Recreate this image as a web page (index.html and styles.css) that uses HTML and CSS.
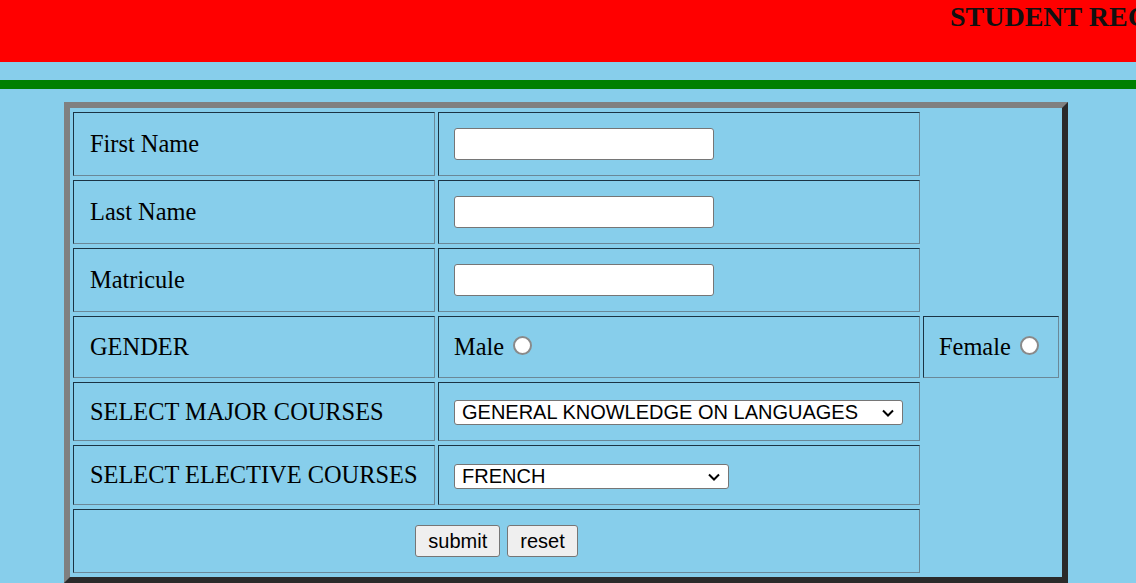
FILE: index.html
```html
<!DOCTYPE html>
<html lang="en">
<head>
<meta charset="utf-8">
<title>Student Registration Form</title>
<link rel="stylesheet" href="styles.css">
</head>
<body>
<header class="banner">
  <h3 class="banner-title">STUDENT REGISTRATION FORM</h3>
</header>
<div class="rule"></div>
<main class="page">
  <form class="reg-form">
    <table class="reg-table">
      <colgroup>
        <col class="col-label">
        <col class="col-field">
        <col class="col-extra">
      </colgroup>
      <tr class="row-field">
        <td class="cell cell-label">First Name</td>
        <td class="cell"><input type="text" class="text-input" name="first"></td>
      </tr>
      <tr class="row-field">
        <td class="cell cell-label">Last Name</td>
        <td class="cell"><input type="text" class="text-input" name="last"></td>
      </tr>
      <tr class="row-field">
        <td class="cell cell-label">Matricule</td>
        <td class="cell"><input type="text" class="text-input" name="matricule"></td>
      </tr>
      <tr class="row-gender">
        <td class="cell cell-label">GENDER</td>
        <td class="cell">Male <input type="radio" class="radio" name="gender" value="male"></td>
        <td class="cell">Female <input type="radio" class="radio" name="gender" value="female"></td>
      </tr>
      <tr class="row-major">
        <td class="cell cell-label">SELECT MAJOR COURSES</td>
        <td class="cell cell-select cell-select-major">
          <span class="select-wrap select-major">
            <select class="select" name="major">
              <option>GENERAL KNOWLEDGE ON LANGUAGES</option>
            </select>
            <svg class="chevron" width="12" height="8" viewBox="0 0 12 8" aria-hidden="true"><polyline points="1,1.5 6,6.5 11,1.5" fill="none" stroke="#000" stroke-width="2"/></svg>
          </span>
        </td>
      </tr>
      <tr class="row-elective">
        <td class="cell cell-label">SELECT ELECTIVE COURSES</td>
        <td class="cell cell-select cell-select-elective">
          <span class="select-wrap select-elective">
            <select class="select" name="elective">
              <option>FRENCH</option>
            </select>
            <svg class="chevron" width="12" height="8" viewBox="0 0 12 8" aria-hidden="true"><polyline points="1,1.5 6,6.5 11,1.5" fill="none" stroke="#000" stroke-width="2"/></svg>
          </span>
        </td>
      </tr>
      <tr class="row-actions">
        <td class="cell" colspan="2">
          <div class="actions">
            <button type="submit" class="btn">submit</button>
            <button type="reset" class="btn">reset</button>
          </div>
        </td>
      </tr>
    </table>
  </form>
</main>
</body>
</html>
```
FILE: styles.css
```css
html, body {
  margin: 0;
  padding: 0;
}

body {
  background: #87ceeb;
  font-family: "Liberation Serif", "Times New Roman", serif;
  font-size: 24px;
  color: #000;
  overflow: hidden;
}

.banner {
  background: #ff0000;
  height: 62px;
  box-sizing: border-box;
  padding-left: 950px;
  overflow: hidden;
  white-space: nowrap;
}

.banner-title {
  margin: 0;
  padding-top: 1px;
  font-size: 28px;
  font-weight: bold;
  color: #111;
}

.rule {
  height: 9px;
  margin-top: 18px;
  background: #008000;
}

.page {
  padding: 13px 0 0 64px;
}

.reg-form {
  margin: 0;
}

.reg-table {
  box-sizing: border-box;
  width: 1004px;
  table-layout: fixed;
  border-collapse: separate;
  border-spacing: 3px 4px;
  border: 6px solid;
  border-color: #808080 #2a2a2a #2a2a2a #808080;
  font-size: 24.4px;
  line-height: 26px;
}

.col-label { width: 362px; }
.col-field { width: 482px; }
.col-extra { width: 136px; }

.cell {
  box-sizing: border-box;
  padding: 15px;
  border: 1px solid;
  border-color: #1b3444 #6a8898 #6a8898 #1b3444;
  vertical-align: middle;
  white-space: nowrap;
}

.cell-label {
  padding-left: 16px;
}

.row-field { height: 64px; }
.row-gender { height: 62px; }
.row-major { height: 59px; }
.row-elective { height: 60px; }
.row-actions { height: 64px; }

.text-input {
  display: block;
  box-sizing: border-box;
  width: 260px;
  height: 32px;
  margin: 0;
  padding: 0 4px;
  border: 1px solid #767676;
  border-radius: 3px;
  background: #fff;
  font-family: "Liberation Sans", Arial, sans-serif;
  font-size: 20px;
}

.radio {
  -webkit-appearance: none;
  appearance: none;
  box-sizing: border-box;
  width: 19px;
  height: 19px;
  margin: 0 0 0 3px;
  border: 2px solid #8a8a8a;
  border-radius: 50%;
  background: #fff;
  vertical-align: baseline;
}

.cell-select-major { padding-top: 17px; padding-bottom: 15px; }
.cell-select-elective { padding-top: 18px; padding-bottom: 15px; }

.select-wrap {
  position: relative;
  display: block;
  height: 25px;
}

.select-major { width: 449px; }
.select-elective { width: 275px; }

.select {
  -webkit-appearance: none;
  appearance: none;
  box-sizing: border-box;
  display: block;
  width: 100%;
  height: 25px;
  margin: 0;
  padding: 0 0 0 7px;
  border: 1px solid #767676;
  border-radius: 3px;
  background: #fff;
  color: #000;
  font-family: "Liberation Sans", Arial, sans-serif;
  font-size: 20px;
  line-height: 23px;
}

.chevron {
  position: absolute;
  right: 9px;
  top: 9px;
  pointer-events: none;
}

.actions {
  display: flex;
  justify-content: center;
  gap: 7px;
}

.btn {
  box-sizing: border-box;
  height: 32px;
  margin: 0;
  padding: 0 12px;
  border: 1px solid #767676;
  border-radius: 3px;
  background: #efefef;
  color: #000;
  font-family: "Liberation Sans", Arial, sans-serif;
  font-size: 20px;
}
```
